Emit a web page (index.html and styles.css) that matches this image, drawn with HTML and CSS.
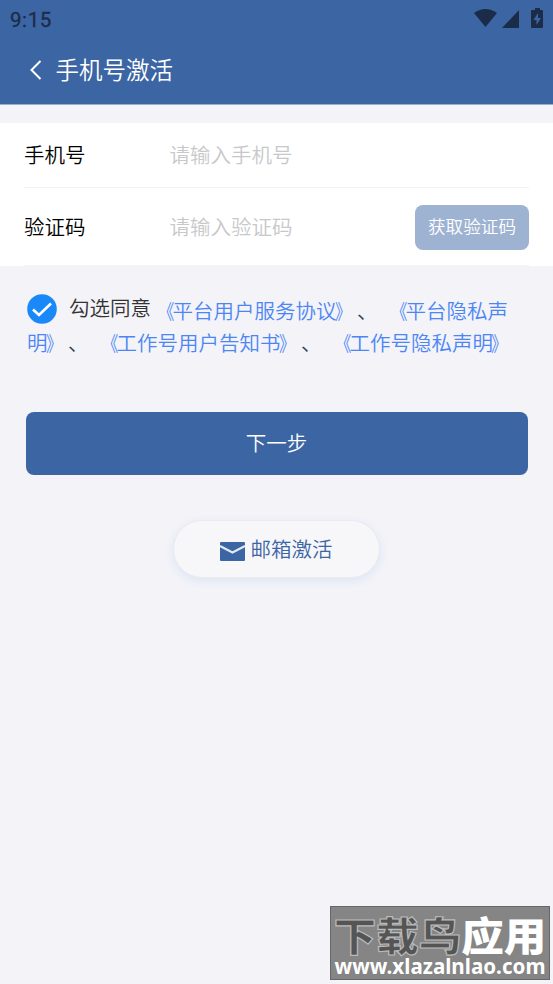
FILE: index.html
```html
<!DOCTYPE html>
<html lang="zh-CN">
<head>
<meta charset="utf-8">
<title>手机号激活</title>
<link rel="stylesheet" href="styles.css">
</head>
<body>
<header class="header">
  <div class="status">
    <span class="clock">9:15</span>
    <svg class="status-icons" width="72" height="22" viewBox="0 0 72 22">
      <path d="M0 4Q11.500 -4 23 4L11.500 18Z"/>
      <path d="M45 1V19H28Z"/>
      <path fill-rule="evenodd" d="M61 -1H66V1H68Q69 1 69 2V18Q69 19 68 19H58Q57 19 57 18V2Q57 1 58 1H61ZM64 4L59.500 11H62.500V16L67 9H64Z"/>
    </svg>
  </div>
  <div class="nav">
    <svg class="back" width="14" height="22" viewBox="0 0 14 22"><path d="M11.500 2L2.500 11L11.500 20"/></svg>
    <h1 class="title">手机号激活</h1>
  </div>
</header>
<main>
  <section class="form">
    <div class="row row-phone"><span class="label">手机号</span><span class="placeholder">请输入手机号</span></div>
    <div class="row row-code"><span class="label">验证码</span><span class="placeholder">请输入验证码</span><button class="get-code">获取验证码</button></div>
  </section>
  <div class="agree">
    <svg class="check" width="30" height="30" viewBox="0 0 30 30"><circle cx="15" cy="15" r="14.800"/><path d="M6 15.500L12 21L24 9.500"/></svg><span class="agree-label">勾选同意</span><a class="first"><span class="open">《</span>平台用户服务协议<span class="close">》</span></a>、<a><span class="open">《</span>平台隐私声明<span class="close">》</span></a>、<a><span class="open">《</span>工作号用户告知书<span class="close">》</span></a>、<a><span class="open">《</span>工作号隐私声明<span class="close">》</span></a>
  </div>
  <button class="next">下一步</button>
  <button class="email">
    <svg width="25" height="19" viewBox="0 0 25 19"><rect width="25" height="19" rx="1" fill="#3c65a3"/><path d="M0 4L12.500 10.500L25 4" fill="none" stroke="#e4eaf3" stroke-width="2"/></svg>
    <span>邮箱激活</span>
  </button>
</main>
<aside class="watermark">
  <div class="brand"><span class="dark">下载鸟</span><span class="light">应用</span></div>
  <div class="site">www.xlazalnlao.com</div>
</aside>
</body>
</html>
```
FILE: styles.css
```css
* { box-sizing: border-box; }
body {
  margin: 0;
  min-height: 984px;
  background: #f3f3f8;
  font-family: "Noto Sans CJK SC DemiLight", "Noto Sans CJK SC", sans-serif;
  font-size: 20.5px;
  font-weight: 350;
  text-spacing-trim: space-all;
}
button { border: 0; padding: 0 0 3px; font: inherit; }
.header { height: 105px; background: #3c65a3; border-bottom: 1px solid #9bb0d0; }
.status { display: flex; justify-content: space-between; height: 38px; padding: 9px 7px 0 10px; }
.clock { font: 400 20.5px/22px Roboto, sans-serif; letter-spacing: .6px; color: #1b2c48; -webkit-text-stroke: .3px #1b2c48; }
.status-icons { overflow: visible; fill: #1b2c48; }
.nav { display: flex; align-items: center; height: 64px; padding-left: 29px; }
.back { fill: none; stroke: #fff; stroke-width: 2; }
.title { margin: 0 0 3px 12.5px; font-size: 23.5px; font-weight: 350; line-height: 34px; color: #fff; }
.form { height: 143px; margin-top: 18px; padding: 0 24px; background: #fff; }
.row { display: flex; align-items: center; border-bottom: 1px solid #f3f3f5; }
.row-phone { height: 65px; }
.row-code { height: 78px; }
.label { width: 145.500px; padding-bottom: 2px; color: #000; }
.placeholder { padding-bottom: 2px; color: #c8c8cb; }
.get-code {
  width: 114px; height: 45px; margin: 1px 0 0 auto; border-radius: 8px;
  background: #9eb2d1; color: #fff; font-size: 17.600px;
}
.agree { margin: 28px 24px 0 27px; width: 501px; line-height: 32px; color: #304156; }
.check { display: inline-block; vertical-align: -5px; margin-right: 12px; fill: #1989fa; }
.check path { fill: none; stroke: #fff; stroke-width: 2.600; }
.agree-label { position: relative; top: -3px; color: #323233; }
.agree a { margin-left: 7.5px; color: #4c86f5; }
.agree a.first { margin-left: 1px; }
.open, .close { display: inline-block; line-height: 1; }
.open { transform: translateX(2px) scaleX(.8); transform-origin: right; }
.close { transform: translateX(-2px) scaleX(.8); transform-origin: left; }
.next {
  display: block; width: 502px; height: 63px; margin: 54px 0 0 25.500px;
  padding-bottom: 4px; border-radius: 8px; background: #3c65a3; color: #fff;
}
.email {
  display: flex; align-items: center; justify-content: center; gap: 6px;
  width: 207px; height: 58px; margin: 45px auto 0; padding-right: 1px;
  border: 1px solid #ebebed; border-radius: 29px;
  background: #f7f7fa; color: #3c65a3; box-shadow: 0 3px 8px #dce5f5;
}
.email svg { margin-top: 7px; }
.watermark {
  position: absolute; left: 330px; top: 906px; width: 220px; height: 74px;
  padding-top: 6px; border: 1px solid #666; background: #858585;
}
.brand {
  display: flex; justify-content: center; height: 41px;
  font-family: "Noto Sans CJK SC", sans-serif;
  font-size: 42.5px; font-weight: 900; line-height: 42px;
  transform: scaleY(.94);
}
.dark { color: #555; -webkit-text-stroke: 1.2px #bbb; }
.light { color: #fff; }
.site { font: 700 20.6px/24px "Noto Sans", sans-serif; text-align: center; color: #fff; }
```
